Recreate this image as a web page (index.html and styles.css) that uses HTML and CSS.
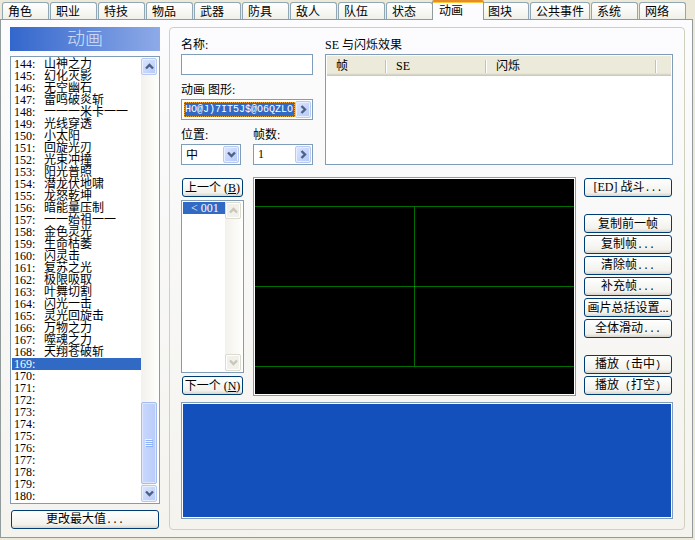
FILE: index.html
```html
<!DOCTYPE html>
<html lang="zh-CN">
<head>
<meta charset="utf-8">
<title>动画</title>
<link rel="stylesheet" href="styles.css">
</head>
<body>
<svg class="defs" aria-hidden="true">
  <symbol id="down" viewBox="0 0 9 7"><path d="M1 1.5 4.5 5 8 1.5" fill="none" stroke="currentColor" stroke-width="2.4"/></symbol>
  <symbol id="up" viewBox="0 0 9 7"><path d="M1 5.5 4.5 2 8 5.5" fill="none" stroke="currentColor" stroke-width="2.4"/></symbol>
  <symbol id="right" viewBox="0 0 7 9"><path d="M1.5 1 5 4.5 1.5 8" fill="none" stroke="currentColor" stroke-width="2.4"/></symbol>
</svg>
<nav class="tabs" role="tablist">
  <button class="tab" role="tab">角色</button>
  <button class="tab" role="tab">职业</button>
  <button class="tab" role="tab">特技</button>
  <button class="tab" role="tab">物品</button>
  <button class="tab" role="tab">武器</button>
  <button class="tab" role="tab">防具</button>
  <button class="tab" role="tab">敌人</button>
  <button class="tab" role="tab">队伍</button>
  <button class="tab" role="tab">状态</button>
  <button class="tab active" role="tab" aria-selected="true">动画</button>
  <button class="tab" role="tab">图块</button>
  <button class="tab" role="tab">公共事件</button>
  <button class="tab" role="tab">系统</button>
  <button class="tab" role="tab">网络</button>
</nav>
<main class="pane">
  <section class="sidebar">
    <h1 class="title">动画</h1>
    <div class="box listbox">
      <ul class="items" role="listbox">
        <li><span>144:</span>山神之力</li>
        <li><span>145:</span>幻化灭影</li>
        <li><span>146:</span>无空幽石</li>
        <li><span>147:</span>雷鸣破炎斩</li>
        <li><span>148:</span>一一一米卡一一</li>
        <li><span>149:</span>光线穿透</li>
        <li><span>150:</span>小太阳</li>
        <li><span>151:</span>回旋光刃</li>
        <li><span>152:</span>光束冲撞</li>
        <li><span>153:</span>阳光普照</li>
        <li><span>154:</span>潜龙伏地啸</li>
        <li><span>155:</span>龙怒乾坤</li>
        <li><span>156:</span>暗能量压制</li>
        <li><span>157:</span>一一始祖一一</li>
        <li><span>158:</span>金色灵光</li>
        <li><span>159:</span>生命枯萎</li>
        <li><span>160:</span>闪灵击</li>
        <li><span>161:</span>复苏之光</li>
        <li><span>162:</span>极限吸取</li>
        <li><span>163:</span>叶舞切割</li>
        <li><span>164:</span>闪光一击</li>
        <li><span>165:</span>灵光回旋击</li>
        <li><span>166:</span>万物之力</li>
        <li><span>167:</span>噬魂之力</li>
        <li><span>168:</span>天翔苍破斩</li>
        <li class="selected"><span>169:</span></li>
        <li><span>170:</span></li>
        <li><span>171:</span></li>
        <li><span>172:</span></li>
        <li><span>173:</span></li>
        <li><span>174:</span></li>
        <li><span>175:</span></li>
        <li><span>176:</span></li>
        <li><span>177:</span></li>
        <li><span>178:</span></li>
        <li><span>179:</span></li>
        <li><span>180:</span></li>
      </ul>
      <div class="scroll">
        <button class="arrow" aria-label="向上"><svg width="9" height="7"><use href="#up"/></svg></button>
        <div class="track"><div class="thumb"><svg width="8" height="8" shape-rendering="crispEdges"><path d="M0 .5h7M0 2.5h7M0 4.5h7M0 6.5h7" stroke="#eef4fe"/><path d="M1 1.5h7M1 3.5h7M1 5.5h7M1 7.5h7" stroke="#8cb0f8"/></svg></div></div>
        <button class="arrow" aria-label="向下"><svg width="9" height="7"><use href="#down"/></svg></button>
      </div>
    </div>
    <button class="btn max">更改最大值<span class="mono">...</span></button>
  </section>

  <section class="group">
    <div class="upper">
      <div class="fields">
        <div class="field wide">
          <label for="name">名称:</label>
          <input class="box text" id="name" type="text">
        </div>
        <div class="field wide">
          <label for="graphic">动画 图形:</label>
          <div class="box combo">
            <input class="graphic" id="graphic" type="text" value="HO@J)7IT5J$@O6QZLO">
            <button class="arrow" aria-label="选择图形"><svg width="7" height="9"><use href="#right"/></svg></button>
          </div>
        </div>
        <div class="field">
          <label for="position">位置:</label>
          <div class="box combo">
            <select id="position"><option>中</option></select>
            <span class="arrow"><svg width="9" height="7"><use href="#down"/></svg></span>
          </div>
        </div>
        <div class="field">
          <label for="frames">帧数:</label>
          <div class="box combo">
            <input id="frames" type="text" value="1">
            <button class="arrow" aria-label="更改帧数"><svg width="7" height="9"><use href="#right"/></svg></button>
          </div>
        </div>
      </div>
      <div class="effects">
        <h2 class="caption" id="effects">SE 与闪烁效果</h2>
        <div class="box report">
          <table aria-labelledby="effects">
            <thead><tr><th class="frame-col">帧</th><th class="se-col">SE</th><th class="flash-col">闪烁</th><td></td></tr></thead>
          </table>
        </div>
      </div>
    </div>

    <div class="lower">
      <div class="timeline">
        <button class="btn">上一个 (<u>B</u>)</button>
        <div class="box listbox frames">
          <ul class="items" role="listbox"><li class="selected">&lt; 001</li></ul>
          <div class="scroll disabled">
            <button class="arrow" disabled aria-label="向上"><svg width="9" height="7"><use href="#up"/></svg></button>
            <div class="track"></div>
            <button class="arrow" disabled aria-label="向下"><svg width="9" height="7"><use href="#down"/></svg></button>
          </div>
        </div>
        <button class="btn">下一个 (<u>N</u>)</button>
      </div>
      <div class="box preview">
        <svg viewBox="0 0 319 215" shape-rendering="crispEdges" aria-hidden="true">
          <path d="M0 27.5h319M0 107.5h319M0 187.5h319M159.5 27v161" fill="none" stroke="#006e00"/>
          <path d="M159 107.5h1" stroke="#00a000"/>
        </svg>
      </div>
      <div class="actions">
        <div class="stack"><button class="btn">[ED] 战斗<span class="mono">...</span></button></div>
        <div class="stack">
          <button class="btn">复制前一帧</button>
          <button class="btn">复制帧<span class="mono">...</span></button>
          <button class="btn">清除帧<span class="mono">...</span></button>
          <button class="btn">补充帧<span class="mono">...</span></button>
          <button class="btn">画片总括设置...</button>
          <button class="btn">全体滑动<span class="mono">...</span></button>
        </div>
        <div class="stack">
          <button class="btn">播放<span class="mono"> (</span>击中<span class="mono">)</span></button>
          <button class="btn">播放<span class="mono"> (</span>打空<span class="mono">)</span></button>
        </div>
      </div>
    </div>

    <div class="box cells"><div class="canvas"></div></div>
  </section>
</main>
</body>
</html>
```
FILE: styles.css
```css
* {
  box-sizing: border-box;
}

body {
  margin: 0;
  min-height: 100vh;
  padding: 0 2px 2px 0;
  display: flex;
  flex-direction: column;
  background: #ece9d8;
  color: #000;
  font: 12px/12px "Liberation Serif", "Noto Sans CJK SC", serif;
}

button,
input,
select {
  font: inherit;
  color: inherit;
  margin: 0;
}

.mono {
  font-family: "Liberation Mono", monospace;
  font-size: 10px;
  white-space: pre;
}

.defs {
  display: none;
}

/* Tabs */
.tabs {
  display: flex;
  align-items: flex-end;
  height: 20px;
  padding-left: 2px;
  margin-bottom: -1px;
}

.tab {
  min-width: 47px;
  height: 18px;
  margin-right: 1px;
  padding: 2px 5px 0;
  border: 1px solid #91a7b4;
  border-radius: 3px 3px 0 0;
  border-bottom-color: #919b9c;
  background: linear-gradient(#fff, #f0f0ea);
  text-align: left;
  white-space: nowrap;
}

.tab.active {
  position: relative;
  min-width: 52px;
  height: 20px;
  margin: 0 -2px;
  padding: 0 6px 1px;
  border: 1px solid #919b9c;
  border-top: 2px solid #e68b2c;
  border-bottom: 0;
  border-radius: 2px 2px 0 0;
  background: #fcfcfe;
  box-shadow: inset 0 1px #ffc73c;
}

/* Page */
.pane {
  flex: 1;
  display: flex;
  gap: 9px;
  padding: 7px 7px 7px 9px;
  border: 1px solid #919b9c;
  background: linear-gradient(#fcfcfe, #f4f3ee);
}

.box {
  border: 1px solid #7f9db9;
  padding: 1px;
  background: #fff;
}

.sidebar {
  width: 150px;
  flex: none;
  display: flex;
  flex-direction: column;
}

.title {
  margin: 0 0 5px;
  background: linear-gradient(90deg, #3366cc, #8eaae8);
  color: #d6e2fa;
  font-size: 18px;
  font-weight: 300;
  line-height: 24px;
  text-align: center;
}

.listbox {
  flex: 1;
  display: flex;
}

.items {
  flex: 1;
  margin: 0;
  padding: 0;
  list-style: none;
}

.items li {
  display: flex;
  height: 12px;
  padding-left: 2px;
  line-height: 12px;
  white-space: nowrap;
}

.items li span {
  width: 30px;
}

.items .selected {
  background: #316ac5;
  color: #fff;
}

.frames .items li {
  padding-left: 8px;
}

.scroll {
  width: 17px;
  padding-right: 1px;
  display: flex;
  flex-direction: column;
  background: linear-gradient(90deg, #f3f1ec, #fefefb);
}

.arrow {
  flex: none;
  display: grid;
  place-items: center;
  width: 16px;
  height: 17px;
  padding: 0;
  border: 1px solid #b7caf5;
  border-radius: 2px;
  background: linear-gradient(135deg, #dce6fe, #b4c8f8);
  color: #4d6185;
  box-shadow: inset 0 0 0 1px #e8effe;
}

.disabled .arrow {
  border-color: #dcdbd0;
  background: #f1f0ea;
  color: #c9c7ba;
  box-shadow: inset 0 0 0 1px #fff;
}

.track {
  flex: 1;
  display: flex;
  flex-direction: column;
  justify-content: flex-end;
  padding-bottom: 1px;
}

.thumb {
  height: 20%;
  display: grid;
  place-items: center;
  border: 1px solid #a5bcf0;
  border-radius: 2px;
  background: linear-gradient(90deg, #c9d8fd, #b9cbf9);
  box-shadow: inset 0 0 0 1px #dce6fe;
}

.btn {
  height: 19px;
  padding: 0;
  border: 1px solid #003c74;
  border-radius: 3px;
  background: linear-gradient(#fff, #f2f1ec 80%, #d9d5ca);
  line-height: 16px;
  text-align: center;
  white-space: nowrap;
}

.max {
  margin: 6px 1px 1px;
}

/* Animation editor */
.group {
  flex: 1;
  min-width: 0;
  display: flex;
  flex-direction: column;
  padding: 10px 11px;
  border: 1px solid #d0d0bf;
  border-radius: 4px;
}

.upper {
  display: flex;
  gap: 12px;
}

.fields {
  width: 132px;
  display: grid;
  grid-template-columns: 1fr 1fr;
  gap: 8px 12px;
}

.field {
  min-width: 0;
  display: flex;
  flex-direction: column;
  gap: 2px;
}

.wide {
  grid-column: 1 / 3;
}

.field label,
.caption {
  margin: 0;
  font-size: 12px;
  font-weight: 400;
  line-height: 14px;
  white-space: nowrap;
}

.text {
  width: 100%;
  height: 21px;
  padding: 0 4px;
}

.combo {
  display: flex;
  height: 21px;
}

.combo input,
.combo select {
  flex: 1;
  min-width: 0;
  appearance: none;
  border: 0;
  padding: 0 3px;
  background: none;
  outline: none;
}

.combo .arrow {
  height: 17px;
}

.combo .graphic {
  margin: 1px 0 1px 1px;
  padding: 0;
  border: 1px dotted #f0a030;
  background: #316ac5;
  color: #fff;
  font-family: "Liberation Mono", monospace;
  font-size: 10px;
}

.effects {
  flex: 1;
  display: flex;
  flex-direction: column;
  gap: 2px;
}

.report {
  flex: 1;
}

.report table {
  width: 100%;
  border-collapse: collapse;
  table-layout: fixed;
}

.report thead {
  background: linear-gradient(#ebeadb 85%, #c8c4b4);
}

.report th,
.report td {
  height: 20px;
  padding: 0 0 0 9px;
  font-weight: 400;
  text-align: left;
}

.report th {
  background: linear-gradient(#c5c2b2, #c5c2b2) right 1px center / 1px 13px no-repeat,
    linear-gradient(#fff, #fff) right center / 1px 13px no-repeat;
}

.frame-col {
  width: 60px;
}

.se-col {
  width: 100px;
}

.flash-col {
  width: 170px;
}

.lower {
  flex: 1;
  display: flex;
  margin: 12px 0 6px;
}

.timeline {
  width: 63px;
  margin-right: 9px;
  padding: 1px 0;
  display: flex;
  flex-direction: column;
  gap: 3px;
}

.timeline .btn {
  margin: 0 1px;
}

.preview {
  flex: 1;
  display: flex;
}

.preview svg {
  width: 100%;
  background: #000;
}

.actions {
  width: 97px;
  padding: 1px 1px 1px 8px;
  display: flex;
  flex-direction: column;
  justify-content: space-between;
}

.stack {
  display: flex;
  flex-direction: column;
  gap: 2px;
}

.cells {
  height: 117px;
  display: flex;
}

.canvas {
  flex: 1;
  background: #1450bc;
}
```
